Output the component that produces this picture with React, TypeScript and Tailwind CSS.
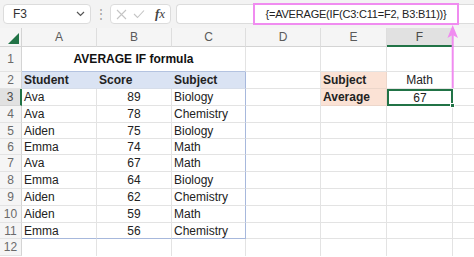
import React from "react";

const font = { fontFamily: '"Liberation Sans", Arial, sans-serif' };

const rows: [string, string, string][] = [
  ["Ava", "89", "Biology"],
  ["Ava", "78", "Chemistry"],
  ["Aiden", "75", "Biology"],
  ["Emma", "74", "Math"],
  ["Ava", "67", "Math"],
  ["Emma", "64", "Biology"],
  ["Aiden", "62", "Chemistry"],
  ["Aiden", "59", "Math"],
  ["Emma", "56", "Chemistry"],
];

const rowHeights = [25, 17, 17, 17, 16, 16, 17, 17, 17, 17, 16, 17];

function RowHead({ n, sel }: { n: number; sel?: boolean }) {
  return (
    <div
      className={
        sel
          ? "flex items-center justify-center bg-[#e1e1e1] border-r-2 border-r-[#217346] border-b border-b-[#d4d4d4] text-[12px] text-[#4a4a4a]"
          : "flex items-center justify-center bg-[#f5f5f5] border-r border-r-[#d4d4d4] border-b border-b-[#e3e3e3] text-[12px] text-[#6a6a6a]"
      }
    >
      {n}
    </div>
  );
}

export default function App() {
  return (
    <div className="relative w-[474px] h-[257px] overflow-hidden bg-white text-[#222]" style={font}>
      {/* toolbar */}
      <div className="flex h-[28px] items-start gap-0 bg-[#f3f3f3] pt-[4px]">
        <div className="ml-[3px] flex h-[20px] w-[88px] items-center justify-between rounded-[4px] border border-[#dcdcdc] bg-white pl-[9px] pr-[5px]">
          <span className="text-[12px] text-[#333]">F3</span>
          <svg width="9" height="6" viewBox="0 0 9 6">
            <path d="M1 1 L4.5 4.5 L8 1" stroke="#555" strokeWidth="1.2" fill="none" />
          </svg>
        </div>
        <div className="flex h-[20px] w-[19px] items-center justify-center text-[12px] text-[#9a9a9a]">⋮</div>
        <div className="flex h-[20px] w-[61px] items-center rounded-[4px] border border-[#dcdcdc] bg-white pl-[5px]">
          <svg width="11" height="11" viewBox="0 0 11 11">
            <path d="M1 1 L10 10 M10 1 L1 10" stroke="#c4c4c4" strokeWidth="1.1" />
          </svg>
          <svg width="12" height="10" viewBox="0 0 12 10" className="ml-[6px]">
            <path d="M1 5 L4.5 8.5 L11 1.5" stroke="#c4c4c4" strokeWidth="1.1" fill="none" />
          </svg>
          <span className="ml-[10px] text-[13px] italic text-[#444]" style={{ fontFamily: '"Liberation Serif", serif' }}>
            <span className="font-bold">f</span>x
          </span>
        </div>
        <div className="ml-[5px] h-[20px] flex-1 rounded-l-[4px] border border-r-0 border-[#dcdcdc] bg-white" />
      </div>

      {/* grid */}
      <div
        className="grid grid-cols-[22px_75px_75px_74px_75px_66px_66px_1fr]"
        style={{ gridTemplateRows: `19px ${rowHeights.map((h) => h + "px").join(" ")}` }}
      >
        {/* column headers */}
        <div className="relative bg-[#f5f5f5] border-r border-b border-[#d4d4d4]">
          <svg width="11" height="11" viewBox="0 0 11 11" className="absolute left-[8px] top-[5px]">
            <path d="M11 0 L11 11 L0 11 Z" fill="#217346" />
          </svg>
        </div>
        {["A", "B", "C", "D", "E"].map((c) => (
          <div
            key={c}
            className="flex items-center justify-center bg-[#f5f5f5] border-r border-r-[#dedede] border-b border-b-[#d4d4d4] text-[12px] text-[#5a5a5a]"
          >
            {c}
          </div>
        ))}
        <div className="flex items-center justify-center bg-[#e1e1e1] border-r border-r-[#dedede] border-b-2 border-b-[#217346] text-[12px] text-[#4a4a4a]">
          F
        </div>
        <div className="bg-[#f5f5f5] border-b border-b-[#d4d4d4]" />

        {/* row 1 */}
        <RowHead n={1} />
        <div className="col-span-3 flex items-center justify-center border-b border-b-[#b4c3e0] border-r border-r-[#e3e3e3] text-[12px] font-bold text-[#111]">
          AVERAGE IF formula
        </div>
        <div className="border-r border-b border-[#e3e3e3]" />
        <div className="border-r border-b border-[#e3e3e3]" />
        <div className="border-r border-b border-[#e3e3e3]" />
        <div className="border-b border-[#e3e3e3]" />

        {/* row 2 */}
        <RowHead n={2} />
        <div className="flex items-center bg-[#dae3f3] pl-[2px] border-b border-[#d6dde9] text-[12px] font-bold">Student</div>
        <div className="flex items-center bg-[#dae3f3] pl-[2px] border-b border-[#d6dde9] text-[12px] font-bold">Score</div>
        <div className="flex items-center bg-[#dae3f3] pl-[2px] border-b border-[#d6dde9] border-r border-r-[#a7b8dc] text-[12px] font-bold">Subject</div>
        <div className="border-r border-b border-[#e3e3e3]" />
        <div className="flex items-center bg-[#fbe2d5] pl-[2px] border-r border-b border-[#ecd6ca] text-[12px] font-bold">Subject</div>
        <div className="flex items-center justify-center border-r border-b border-[#e3e3e3] text-[12px]">Math</div>
        <div className="border-b border-[#e3e3e3]" />

        {rows.map((r, i) => {
          const n = i + 3;
          const last = i === rows.length - 1;
          const bb = last ? "border-b border-b-[#a7b8dc]" : "border-b border-b-[#e3e3e3]";
          return (
            <React.Fragment key={n}>
              <RowHead n={n} sel={n === 3} />
              <div className={`flex items-center pl-[2px] border-r border-r-[#e3e3e3] ${bb} text-[12px]`}>{r[0]}</div>
              <div className={`flex items-center justify-center border-r border-r-[#e3e3e3] ${bb} text-[12px]`}>{r[1]}</div>
              <div className={`flex items-center pl-[2px] border-r border-r-[#a7b8dc] ${bb} text-[12px]`}>{r[2]}</div>
              <div className="border-r border-b border-[#e3e3e3]" />
              {n === 3 ? (
                <>
                  <div className="flex items-center bg-[#fbe2d5] pl-[2px] border-r border-b border-[#ecd6ca] text-[12px] font-bold">Average</div>
                  <div className="relative flex items-center justify-center border-2 border-[#217346] text-[12px]">
                    67
                    <div className="absolute -bottom-[4px] -right-[4px] h-[5px] w-[5px] bg-[#217346] border border-white" />
                  </div>
                </>
              ) : (
                <>
                  <div className="border-r border-b border-[#e3e3e3]" />
                  <div className="border-r border-b border-[#e3e3e3]" />
                </>
              )}
              <div className="border-b border-[#e3e3e3]" />
            </React.Fragment>
          );
        })}

        {/* row 12 */}
        <RowHead n={12} />
        <div className="border-r border-[#e3e3e3]" />
        <div className="border-r border-[#e3e3e3]" />
        <div className="border-r border-[#e3e3e3]" />
        <div className="border-r border-[#e3e3e3]" />
        <div className="border-r border-[#e3e3e3]" />
        <div className="border-r border-[#e3e3e3]" />
        <div />
      </div>

      {/* pink annotation box over formula */}
      <div className="absolute left-[253px] top-[3px] flex h-[22px] w-[206px] items-center justify-center whitespace-nowrap border-2 border-[#f08cf0] text-[11px] tracking-[-0.2px] text-[#222]">
        {"{=AVERAGE(IF(C3:C11=F2, B3:B11))}"}
      </div>
      {/* pink arrow */}
      <svg className="absolute left-[444px] top-[24px]" width="18" height="66" viewBox="0 0 18 66">
        <path d="M8.7 6 L8.7 64" stroke="#f08cf0" strokeWidth="2" />
        <path d="M8.7 1 L14 14 L8.7 11 L3.4 14 Z" fill="#f08cf0" />
      </svg>
    </div>
  );
}
